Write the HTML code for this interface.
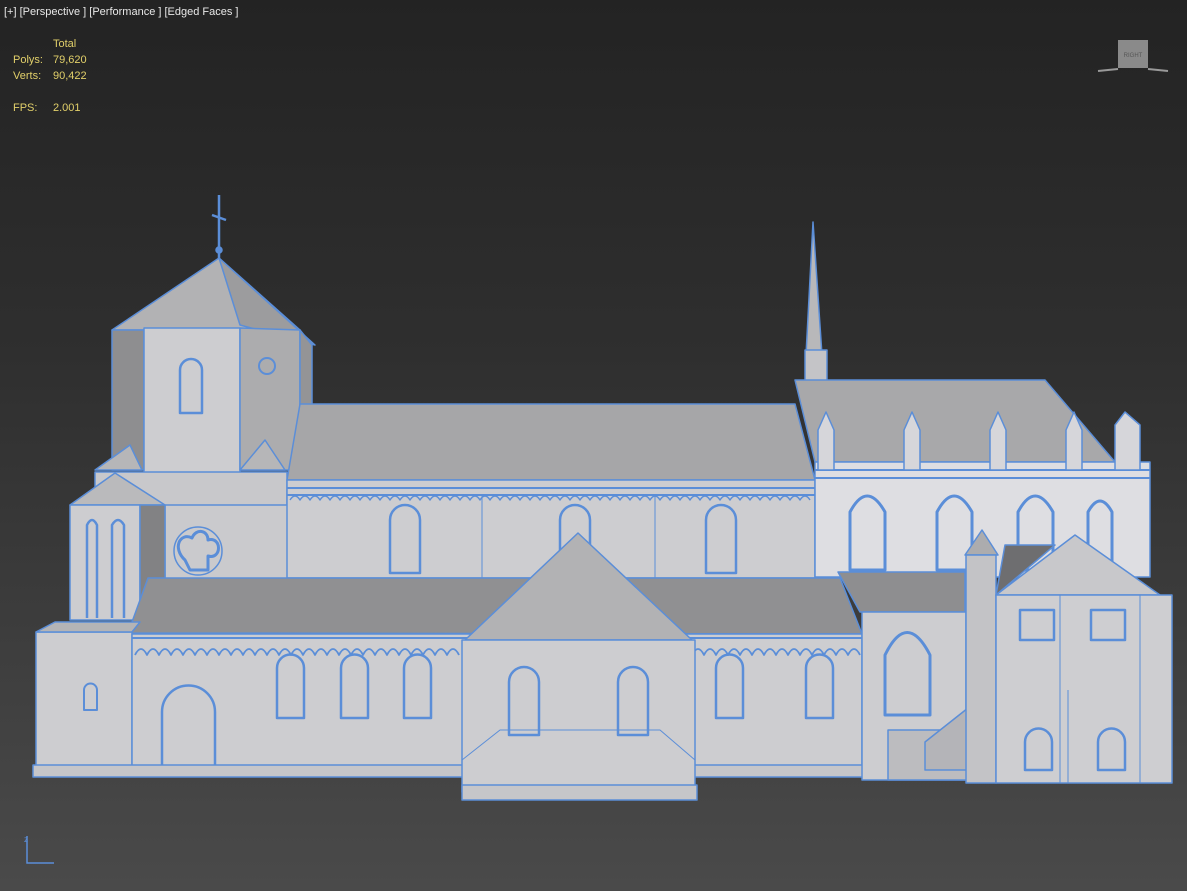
<!DOCTYPE html>
<html><head><meta charset="utf-8"><style>
html,body{margin:0;padding:0;width:1187px;height:891px;overflow:hidden;background:linear-gradient(#232323 0%,#2f2f2f 40%,#4a4a4a 100%);font-family:"Liberation Sans",sans-serif}
.t{position:absolute;font-size:11px;color:#e8e8e8}
.y{position:absolute;font-size:11px;color:#e2d06a}
</style></head><body>
<div class="t" style="left:4px;top:6px">[+] [Perspective ] [Performance ] [Edged Faces ]</div>
<div class="y" style="left:53px;top:38px">Total</div>
<div class="y" style="left:13px;top:54px">Polys:</div><div class="y" style="left:53px;top:54px">79,620</div>
<div class="y" style="left:13px;top:70px">Verts:</div><div class="y" style="left:53px;top:70px">90,422</div>
<div class="y" style="left:13px;top:102px">FPS:</div><div class="y" style="left:53px;top:102px">2.001</div>
<svg width="1187" height="891" style="position:absolute;left:0;top:0" xmlns="http://www.w3.org/2000/svg">
<g>
<rect x="1118" y="40" width="30" height="28" fill="#8a8a8a"/>
<text x="1133" y="57" font-size="6" fill="#555" text-anchor="middle" font-family="Liberation Sans">RIGHT</text>
<path d="M1098 71 L1118 69 M1148 69 L1168 71" stroke="#999" stroke-width="2"/>
</g>
<g stroke="#5b8ed8" stroke-width="1.5" stroke-linejoin="round">
<path d="M219 195 V258 M212 215 L226 220" stroke-width="2.5" fill="none"/>
<circle cx="219" cy="250" r="3" fill="#5b8ed8"/>
<path d="M112 330 L219 258 L300 330 Z" fill="#b2b2b4"/>
<path d="M219 258 L240 325 L315 345 Z" fill="#9c9c9e"/>
<rect x="112" y="330" width="32" height="140" fill="#8e8e90"/>
<rect x="144" y="328" width="96" height="145" fill="#cdcdd0"/>
<path d="M240 328 L300 330 L300 470 L240 470 Z" fill="#acacae"/>
<path d="M300 330 L312 345 V460 L300 470Z" fill="#949496"/>
<path d="M180 413 V370 A11 11 0 0 1 202 370 V413 Z" fill="none" stroke-width="2.5"/>
<circle cx="267" cy="366" r="8" fill="none" stroke-width="2"/>
<path d="M95 470 L130 445 L142 470 Z M240 470 L265 440 L285 470 Z" fill="#b6b6b8"/>
<rect x="95" y="472" width="192" height="35" fill="#c8c8cb"/>
<rect x="165" y="505" width="123" height="75" fill="#cacacd"/>
<circle cx="198" cy="551" r="24" fill="none" stroke-width="1.5"/>
<path d="M185 560 C172 548 180 532 192 538 C196 528 208 530 208 540 C222 536 222 560 208 556 V570 H190 Z" fill="none" stroke-width="3"/>
<path d="M70 505 L115 473 L165 505 Z" fill="#bababc"/>
<rect x="70" y="505" width="70" height="115" fill="#cdcdd0"/>
<path d="M140 505 H165 V585 L140 620 Z" fill="#828284"/>
<path d="M87 618 V525 Q92 515 97 525 V618 M112 618 V525 Q118 515 124 525 V618" fill="none" stroke-width="2.5"/>
<path d="M287 480 L300 404 L795 404 L815 480 Z" fill="#a6a6a8"/>
<rect x="287" y="480" width="528" height="98" fill="#cdcdd0"/>
<path d="M287 488 H815 M287 495 H815" stroke-width="2"/>
<path d="M290 500 q5 -8 10 0 q5 -8 10 0 q5 -8 10 0 q5 -8 10 0 q5 -8 10 0 q5 -8 10 0 q5 -8 10 0 q5 -8 10 0 q5 -8 10 0 q5 -8 10 0 q5 -8 10 0 q5 -8 10 0 q5 -8 10 0 q5 -8 10 0 q5 -8 10 0 q5 -8 10 0 q5 -8 10 0 q5 -8 10 0 q5 -8 10 0 q5 -8 10 0 q5 -8 10 0 q5 -8 10 0 q5 -8 10 0 q5 -8 10 0 q5 -8 10 0 q5 -8 10 0 q5 -8 10 0 q5 -8 10 0 q5 -8 10 0 q5 -8 10 0 q5 -8 10 0 q5 -8 10 0 q5 -8 10 0 q5 -8 10 0 q5 -8 10 0 q5 -8 10 0 q5 -8 10 0 q5 -8 10 0 q5 -8 10 0 q5 -8 10 0 q5 -8 10 0 q5 -8 10 0 q5 -8 10 0 q5 -8 10 0 q5 -8 10 0 q5 -8 10 0 q5 -8 10 0 q5 -8 10 0 q5 -8 10 0 q5 -8 10 0 q5 -8 10 0 q5 -8 10 0" fill="none" stroke-width="1.5"/>
<path d="M482 495 V578 M655 495 V578" fill="none" stroke-width="1"/>
<g fill="none" stroke-width="2.5">
<path d="M390 573 V520 A15 15 0 0 1 420 520 V573 Z"/>
<path d="M560 573 V520 A15 15 0 0 1 590 520 V573 Z"/>
<path d="M706 573 V520 A15 15 0 0 1 736 520 V573 Z"/>
</g>
<path d="M813 222 L806 355 H822 Z" fill="#b8b8ba"/>
<rect x="805" y="350" width="22" height="35" fill="#c4c4c7"/>
<path d="M795 380 L1045 380 L1115 462 L815 462 Z" fill="#a8a8aa"/>
<rect x="815" y="462" width="335" height="115" fill="#dedee2"/>
<path d="M815 470 H1150 M815 478 H1150" stroke-width="2"/>
<g fill="#d6d6da">
<path d="M818 470 V430 L826 412 L834 430 V470 Z"/><path d="M904 470 V430 L912 412 L920 430 V470 Z"/>
<path d="M990 470 V430 L998 412 L1006 430 V470 Z"/><path d="M1066 470 V430 L1074 412 L1082 430 V470 Z"/>
<path d="M1115 470 V425 L1125 412 L1140 425 V470 Z"/>
</g>
<g fill="none" stroke-width="3">
<path d="M850 570 V512 Q867 480 885 512 V570 Z"/><path d="M937 570 V512 Q954 480 972 512 V570 Z"/>
<path d="M1018 570 V512 Q1035 480 1053 512 V570 Z"/><path d="M1088 570 V512 Q1100 490 1112 512 V570 Z"/>
</g>
<path d="M128 633 L148 578 L840 578 L862 634 Z" fill="#909092"/>
<path d="M838 572 L965 572 L965 612 L860 612 Z" fill="#8e8e90"/>
<rect x="36" y="632" width="96" height="138" fill="#cdcdd0"/>
<path d="M36 632 L55 622 H140 L132 632 Z" fill="#b4b4b6"/>
<path d="M84 710 V690 A6.5 6.5 0 0 1 97 690 V710 Z" fill="none" stroke-width="2"/>
<rect x="132" y="634" width="730" height="136" fill="#cdcdd0"/>
<path d="M132 638 H862" stroke-width="2"/>
<path d="M135 655 q6 -12 12 0 q6 -12 12 0 q6 -12 12 0 q6 -12 12 0 q6 -12 12 0 q6 -12 12 0 q6 -12 12 0 q6 -12 12 0 q6 -12 12 0 q6 -12 12 0 q6 -12 12 0 q6 -12 12 0 q6 -12 12 0 q6 -12 12 0 q6 -12 12 0 q6 -12 12 0 q6 -12 12 0 q6 -12 12 0 q6 -12 12 0 q6 -12 12 0 q6 -12 12 0 q6 -12 12 0 q6 -12 12 0 q6 -12 12 0 q6 -12 12 0 q6 -12 12 0 q6 -12 12 0 m233 0 q6 -12 12 0 q6 -12 12 0 q6 -12 12 0 q6 -12 12 0 q6 -12 12 0 q6 -12 12 0 q6 -12 12 0 q6 -12 12 0 q6 -12 12 0 q6 -12 12 0 q6 -12 12 0 q6 -12 12 0 q6 -12 12 0 q6 -12 12 0" fill="none" stroke-width="1.8"/>
<g fill="none" stroke-width="2.5">
<path d="M162 768 V712 A26 26 0 0 1 215 712 V768"/>
<path d="M277 718 V668 A13.5 13.5 0 0 1 304 668 V718 Z"/>
<path d="M341 718 V668 A13.5 13.5 0 0 1 368 668 V718 Z"/>
<path d="M404 718 V668 A13.5 13.5 0 0 1 431 668 V718 Z"/>
<path d="M716 718 V668 A13.5 13.5 0 0 1 743 668 V718 Z"/>
<path d="M806 718 V668 A13.5 13.5 0 0 1 833 668 V718 Z"/>
</g>
<rect x="33" y="765" width="830" height="12" fill="#c6c6c9"/>
<path d="M465 640 L578 533 L692 640 Z" fill="#b2b2b4"/>
<rect x="462" y="640" width="233" height="152" fill="#cdcdd0"/>
<path d="M462 760 L500 730 H660 L695 760" fill="none" stroke-width="1"/>
<rect x="462" y="785" width="235" height="15" fill="#c6c6c9"/>
<g fill="none" stroke-width="2.5">
<path d="M509 735 V682 A15 15 0 0 1 539 682 V735 Z"/>
<path d="M618 735 V682 A15 15 0 0 1 648 682 V735 Z"/>
</g>
<rect x="862" y="612" width="104" height="168" fill="#cdcdd0"/>
<path d="M885 715 V655 Q907 610 930 655 V715 Z" fill="none" stroke-width="3"/>
<rect x="888" y="730" width="80" height="50" fill="#bcbcbf"/>
<path d="M925 742 L968 708 V770 H925 Z" fill="#b4b4b8"/>
<path d="M965 555 L982 530 L998 555 Z" fill="#acacae"/>
<rect x="966" y="555" width="30" height="228" fill="#c3c3c6"/>
<path d="M996 595 L1075 535 L1160 595 Z" fill="#c8c8cb"/>
<path d="M996 595 L1055 545 L1005 545 Z" fill="#6e6e70"/>
<rect x="996" y="595" width="176" height="188" fill="#cecED1"/>
<g fill="none" stroke-width="2.5">
<rect x="1020" y="610" width="34" height="30"/><rect x="1091" y="610" width="34" height="30"/>
<path d="M1025 770 V742 A13.5 13.5 0 0 1 1052 742 V770 Z"/>
<path d="M1098 770 V742 A13.5 13.5 0 0 1 1125 742 V770 Z"/>
</g>
<path d="M1060 595 V783 M1140 595 V783 M1068 690 V783" fill="none" stroke-width="1"/>
</g>
<g stroke="#5b8ed8" stroke-width="1.5" fill="none">
<path d="M27 836 V863 H54"/>
</g>
<text x="24" y="842" font-size="8" fill="#5b8ed8" font-family="Liberation Sans">z</text>
</svg>
</body></html>
